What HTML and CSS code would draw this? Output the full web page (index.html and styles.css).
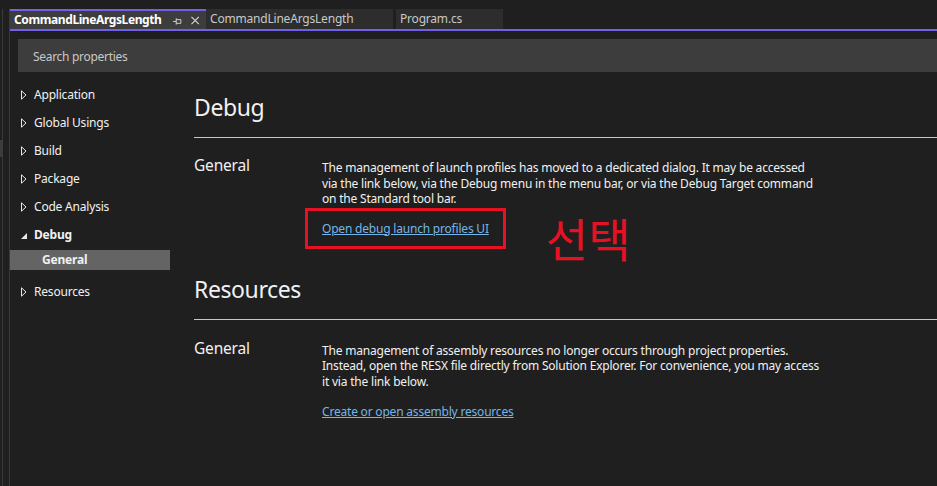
FILE: index.html
```html
<!DOCTYPE html>
<html>
<head>
<meta charset="utf-8">
<link rel="stylesheet" href="styles.css">
</head>
<body>
<div class="app">
  <div class="gutter"><div class="gutter-mark"></div></div>
  <div class="doc">
    <div class="tabs">
      <div class="tab active">
        <span class="tab-title">CommandLineArgsLength</span>
        <svg class="pin" width="10" height="8" viewBox="0 0 10 8"><path d="M0 4.5H3.5M3.5 1V8M3.5 2.5H8.5V6.5H3.5" fill="none" stroke="#d8d8d8" stroke-width="1"/></svg>
        <svg class="close" width="9" height="9" viewBox="0 0 9 9"><path d="M0.5 0.5L8.5 8.5M8.5 0.5L0.5 8.5" stroke="#d8d8d8" stroke-width="1.2"/></svg>
      </div>
      <div class="tab">CommandLineArgsLength</div>
      <div class="tab tab-prog">Program.cs</div>
    </div>
    <div class="tabline"></div>
    <div class="search">Search properties</div>
    <div class="body">
      <nav class="nav">
        <div class="nav-item"><svg class="tri" width="6" height="10" viewBox="0 0 6 10"><path d="M0.5 0.8L5 5L0.5 9.2Z" fill="none" stroke="#e6e6e6" stroke-width="1"/></svg>Application</div>
        <div class="nav-item"><svg class="tri" width="6" height="10" viewBox="0 0 6 10"><path d="M0.5 0.8L5 5L0.5 9.2Z" fill="none" stroke="#e6e6e6" stroke-width="1"/></svg>Global Usings</div>
        <div class="nav-item"><svg class="tri" width="6" height="10" viewBox="0 0 6 10"><path d="M0.5 0.8L5 5L0.5 9.2Z" fill="none" stroke="#e6e6e6" stroke-width="1"/></svg>Build</div>
        <div class="nav-item"><svg class="tri" width="6" height="10" viewBox="0 0 6 10"><path d="M0.5 0.8L5 5L0.5 9.2Z" fill="none" stroke="#e6e6e6" stroke-width="1"/></svg>Package</div>
        <div class="nav-item"><svg class="tri" width="6" height="10" viewBox="0 0 6 10"><path d="M0.5 0.8L5 5L0.5 9.2Z" fill="none" stroke="#e6e6e6" stroke-width="1"/></svg>Code Analysis</div>
        <div class="nav-item open"><svg class="tri" width="6" height="10" viewBox="0 0 6 10"><path d="M6 3V9H0Z" fill="#e6e6e6"/></svg>Debug</div>
        <div class="nav-sub">General</div>
        <div class="nav-item"><svg class="tri" width="6" height="10" viewBox="0 0 6 10"><path d="M0.5 0.8L5 5L0.5 9.2Z" fill="none" stroke="#e6e6e6" stroke-width="1"/></svg>Resources</div>
      </nav>
      <main class="content">
        <section class="section">
          <h1 class="title">Debug</h1>
          <div class="row">
            <h2 class="label">General</h2>
            <div class="desc">
              <p>The management of launch profiles has moved to a dedicated dialog. It may be accessed<br>via the link below, via the Debug menu in the menu bar, or via the Debug Target command<br>on the Standard tool bar.</p>
              <div class="linkrow">
                <a class="link boxed" href="#">Open debug launch profiles UI</a><span class="note">선택</span>
              </div>
            </div>
          </div>
        </section>
        <section class="section second">
          <h1 class="title">Resources</h1>
          <div class="row">
            <h2 class="label">General</h2>
            <div class="desc">
              <p>The management of assembly resources no longer occurs through project properties.<br>Instead, open the RESX file directly from Solution Explorer. For convenience, you may access<br>it via the link below.</p>
              <div class="linkrow">
                <a class="link" href="#">Create or open assembly resources</a>
              </div>
            </div>
          </div>
        </section>
      </main>
    </div>
  </div>
</div>
</body>
</html>
```

FILE: styles.css
```css
html, body {
  margin: 0;
  padding: 0;
  background: #1f1f1f;
  width: 937px;
  height: 486px;
  overflow: hidden;
  font-family: "Noto Sans", "Noto Sans CJK KR", sans-serif;
  color: #f1f1f1;
  letter-spacing: -0.2px;
}
.app {
  display: flex;
  height: 486px;
}
.gutter {
  width: 6px;
  margin-left: 2px;
  border-left: 1px solid #3a3a3a;
  border-right: 1px solid #3a3a3a;
  margin-top: 9px;
  position: relative;
}
.gutter-mark {
  position: absolute;
  left: -3px;
  top: 131px;
  width: 3px;
  height: 17px;
  background: #3c3c3c;
}
.doc {
  flex: 1;
  display: flex;
  flex-direction: column;
  min-width: 0;
}
.tabs {
  display: flex;
  align-items: flex-end;
  height: 29px;
  gap: 3px;
}
.tab {
  height: 20px;
  box-sizing: border-box;
  background: #2d2d2d;
  color: #c8c8c8;
  font-size: 12px;
  line-height: 20px;
  padding: 0 7px 0 4px;
  width: 187px;
  white-space: nowrap;
}
.tab.active {
  width: 196px;
  background: #3d3d3d;
  border-top: 2px solid #7160e8;
  line-height: 18px;
  color: #ffffff;
  font-weight: 700;
  letter-spacing: -0.4px;
  display: flex;
  align-items: center;
  margin-right: -3px;
}
.tab-title { flex: 0 0 auto; }
.pin { margin-left: 12px; margin-top: 2px; }
.close { margin-left: 8px; }
.tab-prog { width: 107px; }
.tabline {
  height: 2px;
  background: #7160e8;
}
.search {
  margin: 8px 0 0 8px;
  height: 33px;
  box-sizing: border-box;
  background: #3d3d3d;
  color: #c8c8c8;
  font-size: 12px;
  line-height: 33px;
  padding: 1px 0 0 15px;
  letter-spacing: -0.3px;
}
.body {
  display: flex;
  flex: 1;
}
.nav {
  width: 160px;
  padding-top: 13px;
  font-size: 12px;
}
.nav-item {
  height: 28px;
  line-height: 20px;
  display: flex;
  align-items: flex-start;
  padding-left: 11px;
  color: #f1f1f1;
}
.tri {
  margin-top: 5px;
  margin-right: 7px;
  flex: 0 0 auto;
}
.nav-item.open {
  font-weight: 700;
  height: 25px;
}
.nav-sub {
  height: 20px;
  line-height: 20px;
  background: #646464;
  padding-left: 32px;
  font-weight: 700;
  font-size: 12px;
  color: #f1f1f1;
  margin-bottom: 12px;
}
.content {
  flex: 1;
  padding-left: 24px;
  padding-top: 15px;
}
.section { margin: 0; }
.section.second { margin-top: 32px; }
.title {
  margin: 0;
  font-weight: 400;
  font-size: 23px;
  letter-spacing: -0.4px;
  line-height: 36px;
  height: 48px;
  border-bottom: 1px solid #c8c8c8;
  padding-top: 2px;
}
.row {
  display: flex;
  padding-top: 15px;
}
.second .row { padding-top: 16px; }
.label {
  margin: 0;
  width: 128px;
  font-size: 15.5px;
  letter-spacing: -0.2px;
  font-weight: 400;
  line-height: 24px;
}
.desc {
  width: 540px;
  font-size: 12px;
  line-height: 15.5px;
  white-space: nowrap;
}
.desc p {
  margin: 7px 0 0 0;
}
.linkrow {
  margin-top: 14px;
  line-height: 16px;
  height: 16px;
  display: flex;
  align-items: flex-start;
}
.second .linkrow { margin-top: 15px; }
.link {
  display: inline-block;
  color: #75b6e7;
  text-decoration: underline;
  line-height: 16px;
}
.boxed {
  position: relative;
}
.boxed::after {
  content: "";
  position: absolute;
  left: -17px;
  right: -17px;
  top: -13px;
  bottom: -12px;
  border: 3px solid #e81123;
  pointer-events: none;
}
.note {
  color: #e81123;
  font-size: 46px;
  letter-spacing: 0;
  font-family: "Noto Sans CJK KR", sans-serif;
  margin-left: 57px;
  margin-top: -7px;
  line-height: 46px;
}
```
